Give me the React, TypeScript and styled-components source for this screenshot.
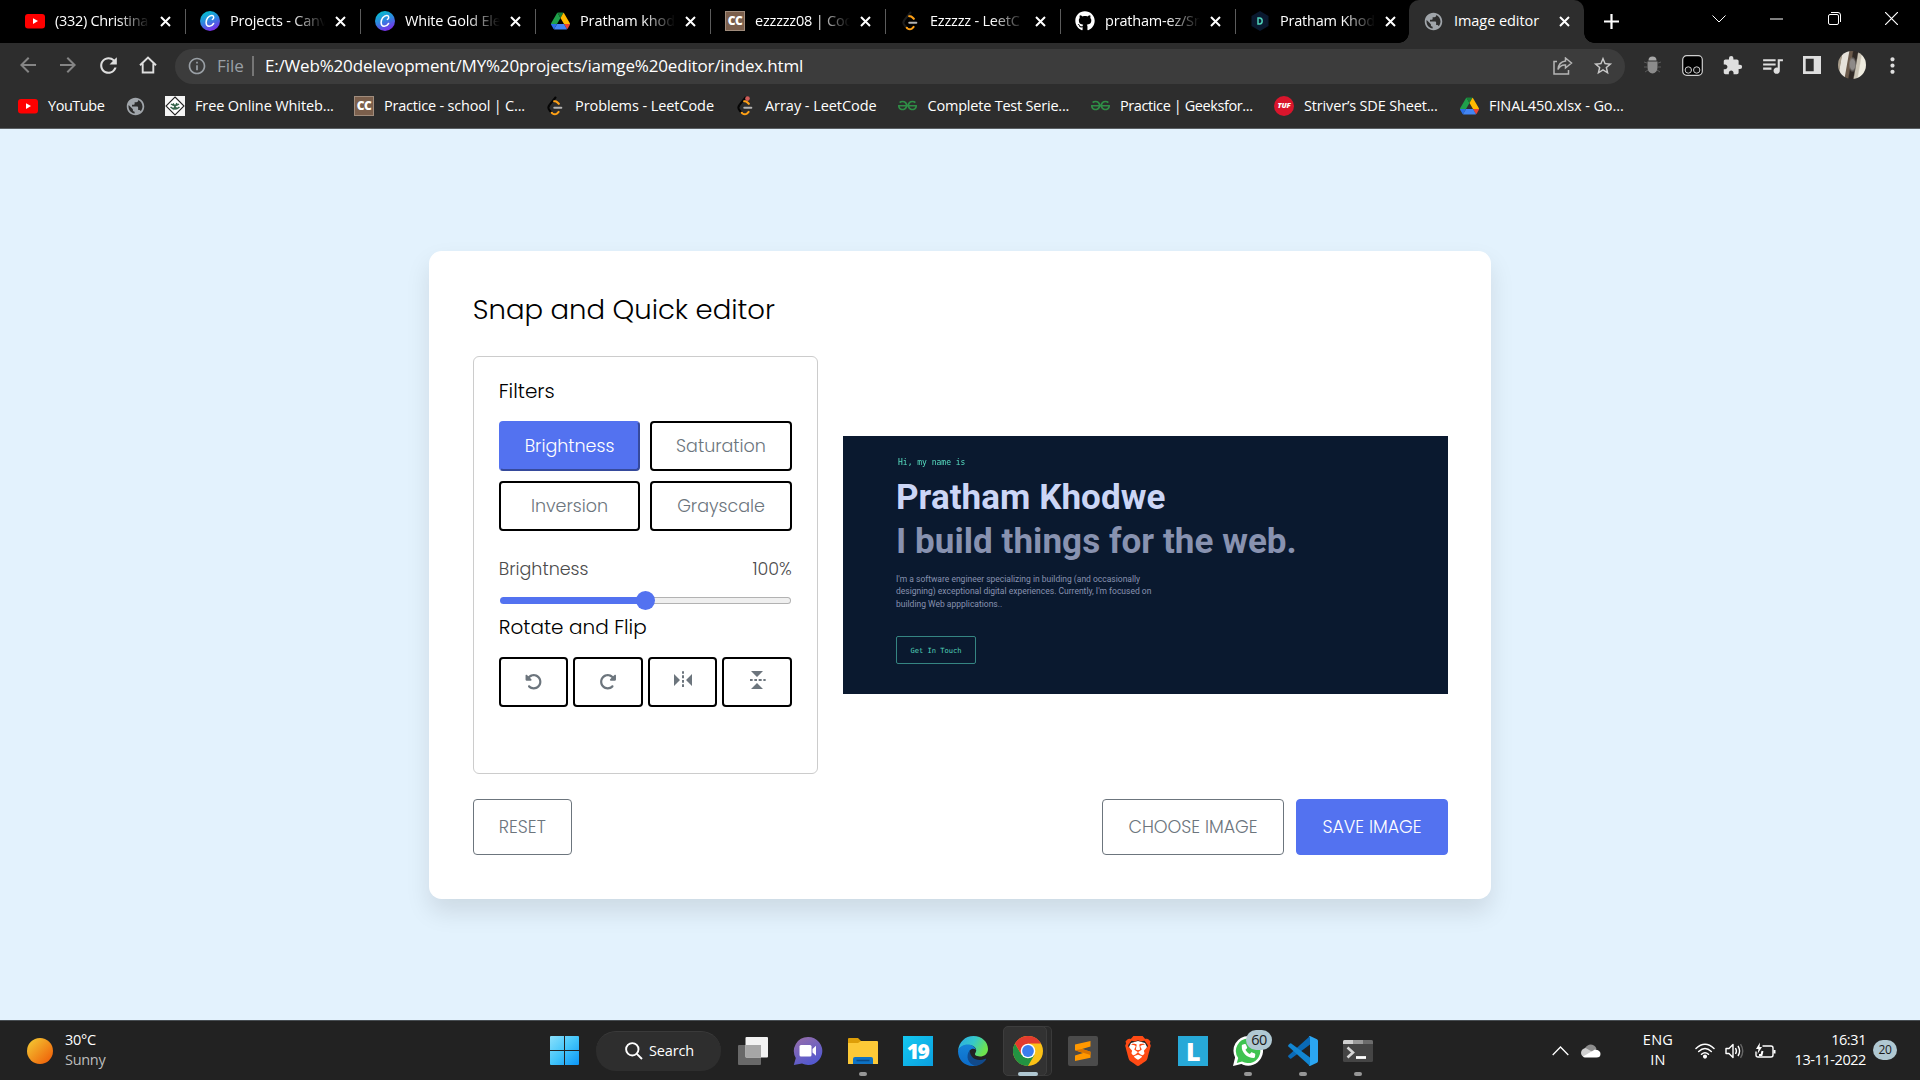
import React, { useState } from "react";
import styled, { createGlobalStyle, css } from "styled-components";
import {
  MdArrowBack,
  MdArrowForward,
  MdExtension,
  MdInfoOutline,
  MdMoreVert,
  MdPublic,
  MdQueueMusic,
  MdRefresh,
  MdStarBorder,
} from "react-icons/md";
import { FaGithub, FaPhone, FaRotateLeft, FaRotateRight } from "react-icons/fa6";
import { SiBrave, SiGeeksforgeeks } from "react-icons/si";

const uiFont = '"Segoe UI", "Open Sans", "Noto Sans", sans-serif';
const accent = "#5372f0";

const GlobalStyle = createGlobalStyle`
  *, *::before, *::after { box-sizing: border-box; }
  body { margin: 0; background: #e3f2fd; overflow: hidden; }
  button { margin: 0; cursor: pointer; }
  svg { display: block; flex: none; }
`;

const Desktop = styled.div`
  display: grid;
  grid-template-rows: 43px 44px 42px 1fr 60px;
  width: 1920px;
  height: 1080px;
  font-family: ${uiFont};
  color: #fff;
  overflow: hidden;
`;

/* ---------- Tab strip ---------- */

const TabStrip = styled.div`
  display: flex;
  background: #000;
  padding-left: 10px;
`;

const Tab = styled.div<{ $active?: boolean; $divider?: boolean }>`
  position: relative;
  display: flex;
  align-items: center;
  width: 175px;
  height: 43px;
  padding: 0 0 1px 15px;
  font-size: 14.5px;
  ${(p) =>
    p.$divider &&
    css`
      &::after {
        content: "";
        position: absolute;
        right: -1px;
        top: 9px;
        width: 1px;
        height: 25px;
        background: #5c5c5c;
      }
    `}
  ${(p) =>
    p.$active &&
    css`
      margin-left: -1px;
      padding-left: 14px;
      background: #2d2d2d;
      border-radius: 10px 10px 0 0;
      &::before,
      &::after {
        content: "";
        position: absolute;
        bottom: 0;
        width: 10px;
        height: 10px;
      }
      &::before {
        left: -10px;
        background: radial-gradient(circle at 0 0, #000 9.5px, #2d2d2d 10px);
      }
      &::after {
        right: -10px;
        background: radial-gradient(circle at 100% 0, #000 9.5px, #2d2d2d 10px);
      }
    `}
`;

const TabTitle = styled.span<{ $ls?: number; $fade?: boolean }>`
  width: 95px;
  margin: 0 10px;
  line-height: 20px;
  white-space: nowrap;
  letter-spacing: ${(p) => p.$ls ?? -0.2}px;
  ${(p) => p.$fade && "mask-image: linear-gradient(90deg, #000 62px, transparent 95px);"}
`;

const IconSlot = styled.span`
  display: grid;
  place-items: center;
  flex: 0 0 20px;
  height: 20px;
`;

const NewTab = styled.div`
  display: grid;
  place-items: center;
  width: 54px;
  height: 43px;
`;

const WindowButtons = styled.div`
  display: flex;
  margin-left: auto;
  height: 37px;
`;

const WindowButton = styled.div`
  display: grid;
  place-items: center;
  width: 57.3px;
`;

/* ---------- Toolbar ---------- */

const Toolbar = styled.div`
  display: flex;
  align-items: center;
  background: #2d2d2d;
  padding-left: 8px;
  color: #dedede;
`;

const ToolSlot = styled.div<{ $dim?: boolean }>`
  display: grid;
  place-items: center;
  flex: 0 0 40px;
  height: 40px;
  color: ${(p) => (p.$dim ? "#858585" : "inherit")};
`;

const AddressBar = styled.div`
  display: flex;
  align-items: center;
  width: 1450px;
  height: 35px;
  margin: 2px 7px 0;
  padding: 0 2px 0 12px;
  border-radius: 18px;
  background: #3c3c3c;
`;

const Scheme = styled.span`
  margin: 0 0 1px 10px;
  padding-right: 8px;
  border-right: 2px solid #767676;
  font-size: 17px;
  line-height: 20px;
  color: #9aa0a6;
`;

const Url = styled.span`
  flex: 1;
  margin: 0 0 2px 11px;
  font-size: 17px;
  letter-spacing: -0.17px;
  color: #fff;
  white-space: nowrap;
`;

const Avatar = styled.div`
  width: 28px;
  height: 28px;
  border-radius: 50%;
  background:
    radial-gradient(ellipse 4px 8px at 52% 48%, #8d8a88 0 60%, transparent 100%),
    linear-gradient(
      100deg,
      #a79c8a 0 14%,
      #e6e2da 16% 33%,
      #6b5a4b 36% 44%,
      #2f2925 48% 60%,
      #cbc5b6 64% 72%,
      #efece0 76%
    );
`;

/* ---------- Bookmarks ---------- */

const BookmarkBar = styled.div`
  display: flex;
  align-items: center;
  padding: 0 0 4px 18px;
  background: #2d2d2d;
  border-bottom: 1px solid #5a5f63;
`;

const Bookmark = styled.div<{ $w: number; $ls?: number }>`
  display: flex;
  align-items: center;
  gap: 10px;
  flex: 0 0 ${(p) => p.$w}px;
  font-size: 14.5px;
  line-height: 20px;
  letter-spacing: ${(p) => p.$ls ?? -0.1}px;
  white-space: nowrap;
`;

/* ---------- Favicons ---------- */

const ChefBadge = styled.span`
  display: grid;
  place-items: center;
  width: 20px;
  height: 20px;
  background: #7b5f4c;
  border: 1px solid #a08c7c;
  font: 800 12px/1 "Open Sans", sans-serif;
  letter-spacing: -0.6px;
  color: #fff;
`;

const TufBadge = styled.span`
  display: grid;
  place-items: center;
  width: 20px;
  height: 20px;
  border-radius: 50%;
  background: #d9152c;
  font: italic 800 7.5px/1 "Open Sans", sans-serif;
  color: #fff;
`;

const YouTubeIcon = () => (
  <svg width="20" height="20" viewBox="0 0 20 20">
    <rect y="3" width="20" height="14.4" rx="3" fill="#f00" />
    <path d="M8 7.3v5.6l5-2.8z" fill="#fff" />
  </svg>
);

const CanvaIcon = () => (
  <svg width="20" height="20" viewBox="0 0 20 20">
    <defs>
      <linearGradient id="canva" x1=".2" y1="0" x2=".6" y2="1">
        <stop offset="0" stopColor="#00c4cc" />
        <stop offset=".5" stopColor="#2f86e0" />
        <stop offset="1" stopColor="#7d2ae8" />
      </linearGradient>
    </defs>
    <circle cx="10" cy="10" r="10" fill="url(#canva)" />
    <path
      d="M12.4 8.4c1.7-.8 1.9-3.9-.3-4C8.6 4.2 5.9 8.2 6.1 11.8c.2 4.6 5 4.6 7.5.7"
      fill="none"
      stroke="#fff"
      strokeWidth="1.5"
      strokeLinecap="round"
    />
  </svg>
);

const DriveIcon = () => (
  <svg width="19" height="18" viewBox="0 0 87.3 78">
    <path d="M6.6 66.85l3.85 6.65c.8 1.4 1.95 2.5 3.3 3.3L27.5 53H0c0 1.55.4 3.1 1.2 4.5z" fill="#2a6fe8" />
    <path d="M43.65 25L29.9 1.2c-1.35.8-2.5 1.9-3.3 3.3L1.2 48.5A9 9 0 000 53h27.5z" fill="#1fa04a" />
    <path d="M73.55 76.8c1.35-.8 2.5-1.9 3.3-3.3l1.6-2.75L86.1 57.5c.8-1.4 1.2-2.95 1.2-4.5H59.8l5.85 11.5z" fill="#ea4335" />
    <path d="M43.65 25L57.4 1.2C56.05.4 54.5 0 52.9 0H34.4c-1.6 0-3.15.45-4.5 1.2z" fill="#188038" />
    <path d="M59.8 53H27.5L13.75 76.8c1.35.8 2.9 1.2 4.5 1.2h50.8c1.6 0 3.15-.45 4.5-1.2z" fill="#4285f4" />
    <path d="M73.4 26.5L60.7 4.5c-.8-1.4-1.95-2.5-3.3-3.3L43.65 25l16.15 28h27.45c0-1.55-.4-3.1-1.2-4.5z" fill="#ffba00" />
  </svg>
);

const LeetCodeIcon = ({ dot, dark }: { dot?: boolean; dark?: boolean }) => (
  <svg width="20" height="20" viewBox="0 0 20 20" fill="none" strokeWidth="2.1" strokeLinecap="round">
    <path d="M10.500 1.500L4.500 8.800q-2.200 2.700 0 5.400l1.300 1.500" stroke={dark ? "#1c1c1c" : "#050505"} />
    <path d="M9.200 5.300q1.700-.4 3 .9l1.600 1.600M6.800 16.800l.7.7q2.300 1.600 4.600 0l1.500-1.600" stroke="#ffa116" />
    <path d="M9.300 11.700h7" stroke="#b3b3b3" />
    {dot && <circle cx="12.5" cy="2.6" r="2.3" fill="#cf5b57" />}
  </svg>
);

const WhiteboardIcon = () => (
  <svg width="20" height="20" viewBox="0 0 20 20">
    <rect width="20" height="20" fill="#f4f4f4" />
    <path d="M10 1l9 9-9 9-9-9z" fill="#fff" stroke="#222" strokeWidth="1.1" />
    <path d="M6 8q4 3 8 0M5.5 11q4.5 4 9 0M8 7.5l4 6M12 7l-4 7" fill="none" stroke="#35634a" strokeWidth="1.5" />
  </svg>
);

const HexIcon = () => (
  <svg width="20" height="20" viewBox="0 0 20 20">
    <path d="M10 0l8.5 5v10L10 20l-8.5-5V5z" fill="#0a192f" />
    <path d="M8 7v6h1.6q2.6-.2 2.6-3T9.600 7z" fill="none" stroke="#4fd0b8" strokeWidth="1.5" />
  </svg>
);

const CloseIcon = () => (
  <svg width="11" height="11" viewBox="0 0 11 11">
    <path d="M1 1l9 9M10 1l-9 9" stroke="#fff" strokeWidth="2" />
  </svg>
);

const Globe = () => <MdPublic size={21} color="#a0a5aa" />;

/* ---------- Editor ---------- */

const Page = styled.main`
  display: grid;
  place-items: center;
  background: #e3f2fd;
`;

const Card = styled.section`
  display: flex;
  flex-direction: column;
  width: 1062px;
  height: 648px;
  padding: 38px 43px 44px 43.75px;
  border-radius: 12.5px;
  background: #fff;
  box-shadow: 0 12.5px 25px rgba(0, 0, 0, 0.1);
  font-family: Poppins, Inter, sans-serif;
  font-weight: 300;
  color: #000;
`;

const Heading = styled.h2`
  margin: 0;
  font-size: 27.5px;
  font-weight: 300;
  line-height: 42px;
`;

const Workspace = styled.div`
  display: flex;
  align-items: center;
  justify-content: space-between;
  height: 418px;
  margin-top: 25px;
`;

const Panel = styled.div`
  width: 345px;
  height: 100%;
  padding: 19px 25px;
  border: 1px solid #ccc;
  border-radius: 6px;
`;

const SectionTitle = styled.label`
  display: block;
  font-size: 20px;
  line-height: 30px;
`;

const ButtonGrid = styled.div<{ $cols: number; $gap: string }>`
  display: grid;
  grid-template-columns: repeat(${(p) => p.$cols}, 1fr);
  gap: ${(p) => p.$gap};
  margin-top: 15px;
`;

const ToolButton = styled.button<{ $active?: boolean }>`
  display: grid;
  place-items: center;
  height: 50px;
  padding: 0;
  border: 2px ${(p) => (p.$active ? `outset ${accent}` : "solid #000")};
  border-radius: 4px;
  background: ${(p) => (p.$active ? accent : "#fff")};
  color: ${(p) => (p.$active ? "#fff" : "#6c757d")};
  font: inherit;
  font-size: 17.5px;
`;

const SliderInfo = styled.div`
  display: flex;
  justify-content: space-between;
  margin-top: 25px;
  font-size: 17.5px;
  line-height: 26px;
  color: #4c4c4c;
`;

const Slider = styled.input`
  display: block;
  appearance: none;
  width: 100%;
  height: 20px;
  margin: 9px 0 1px;
  background: transparent;
  &::-webkit-slider-runnable-track {
    height: 7px;
    margin: 0 1px;
    border: 1px solid transparent;
    border-radius: 4px;
    background:
      linear-gradient(90deg, ${accent} 50%, transparent 50%) border-box,
      linear-gradient(#efefef, #efefef) padding-box,
      linear-gradient(#b2b2b2, #b2b2b2) border-box;
  }
  &::-webkit-slider-thumb {
    appearance: none;
    width: 19px;
    height: 19px;
    margin-top: -7px;
    border-radius: 50%;
    background: ${accent};
  }
`;

const Preview = styled.div`
  display: flex;
  flex-direction: column;
  align-items: flex-start;
  width: 605px;
  height: 258px;
  padding: 20px 0 0 53px;
  background: #0a192f;
  font-family: Roboto, sans-serif;
`;

const Greeting = styled.span`
  margin: 0 0 6px 2px;
  font: 400 8px/14px "DejaVu Sans Mono", monospace;
  color: #64ffda;
  opacity: 0.85;
`;

const Display = styled.span<{ $muted?: boolean }>`
  font-size: 35px;
  font-weight: 700;
  line-height: 44px;
  letter-spacing: 0.05px;
  white-space: nowrap;
  color: ${(p) => (p.$muted ? "#8892b0" : "#ccd6f6")};
`;

const Bio = styled.p`
  margin: 9px 0 26px;
  font-size: 8.5px;
  font-weight: 400;
  line-height: 12.6px;
  white-space: pre;
  color: #8892b0;
`;

const TouchButton = styled.div`
  display: grid;
  place-items: center;
  width: 80px;
  height: 28px;
  border: 1px solid #358582;
  border-radius: 2px;
  font: 400 7.1px/1 "DejaVu Sans Mono", monospace;
  color: #50cfb6;
`;

const Footer = styled.div`
  display: flex;
  gap: 12px;
  height: 56px;
  margin-top: 25px;
`;

const FooterButton = styled.button<{ $w: number; $primary?: boolean; $push?: boolean }>`
  width: ${(p) => p.$w}px;
  padding: 0;
  margin-left: ${(p) => (p.$push ? "auto" : "0")};
  border: 1px solid ${(p) => (p.$primary ? accent : "#6c757d")};
  border-radius: 4px;
  background: ${(p) => (p.$primary ? accent : "#fff")};
  color: ${(p) => (p.$primary ? "#fff" : "#6c757d")};
  font: inherit;
  font-size: 17.5px;
  text-transform: uppercase;
  white-space: nowrap;
`;

const FlipIcon = ({ vertical }: { vertical?: boolean }) => (
  <svg width="18" height="18" viewBox="0 0 54 54" fill="#6c757d" transform={vertical ? "rotate(90)" : undefined}>
    <path d="M0 9v36l18-18zM54 9v36L36 27zM24 1h6v7h-6zM24 13h6v9h-6zM24 27h6v8h-6zM24 40h6v8h-6z" />
  </svg>
);

const FlipSlot = styled.span`
  display: block;
  margin-bottom: 4px;
`;

/* ---------- Taskbar ---------- */

const Taskbar = styled.footer`
  display: flex;
  align-items: center;
  background: #222;
  border-top: 1px solid #474d52;
  font-size: 14.5px;
  line-height: 20px;
`;

const Weather = styled.div`
  display: flex;
  align-items: center;
  width: 550px;
  padding-left: 27px;
  gap: 12px;
`;

const Sun = styled.div`
  width: 26px;
  height: 26px;
  border-radius: 50%;
  background: linear-gradient(135deg, #f3bd2e 15%, #f0680c 85%);
`;

const Stack = styled.div<{ $align?: string; $ls?: number }>`
  padding-bottom: 2px;
  text-align: ${(p) => p.$align ?? "left"};
  letter-spacing: ${(p) => p.$ls ?? -0.3}px;
  white-space: nowrap;
`;

const Muted = styled.div`
  color: #bdbdbd;
`;

const SearchPill = styled.div`
  display: flex;
  align-items: center;
  gap: 6px;
  width: 125px;
  height: 40px;
  margin: 0 4px 0 17px;
  padding-left: 29px;
  border-radius: 20px;
  background: #2e2e2e;
  border-top: 1px solid #3a3a3a;
  letter-spacing: -0.14px;
`;

const AppSlot = styled.div<{ $running?: "idle" | "focused" }>`
  position: relative;
  display: grid;
  place-items: center;
  width: 55px;
  height: 50px;
  ${(p) =>
    p.$running &&
    css`
      &::after {
        content: "";
        position: absolute;
        bottom: 0;
        left: 50%;
        width: ${p.$running === "focused" ? 20 : 8}px;
        height: 4px;
        transform: translateX(-50%);
        border-radius: 2px;
        background: ${p.$running === "focused" ? "#b0c8d2" : "#979797"};
      }
    `}
  ${(p) =>
    p.$running === "focused" &&
    css`
      &::before {
        content: "";
        position: absolute;
        inset: 0 8px 0 3px;
        border: 1px solid #3d3d3d;
        border-radius: 5px;
        background: #323232;
        box-shadow: 5px 0 0 -1px #2a2a2a, 5px 0 0 0 #3a3a3a;
      }
      > svg {
        position: relative;
      }
    `}
`;

const Tile = styled.span<{ $bg: string; $size: number }>`
  display: grid;
  place-items: center;
  width: 30px;
  height: 30px;
  background: ${(p) => p.$bg};
  font: 800 ${(p) => p.$size}px/30px "Open Sans", sans-serif;
  letter-spacing: -1.5px;
  color: #fff;
`;

const Unread = styled.span`
  position: absolute;
  top: 4px;
  left: 26px;
  width: 26px;
  border-radius: 10px;
  background: #b0c8d2;
  color: #1a1a1a;
  text-align: center;
  line-height: 20px;
  letter-spacing: -0.5px;
`;

const Tray = styled.div`
  display: flex;
  align-items: center;
  margin-left: auto;
  padding-right: 23px;
`;

const TrayGap = styled.div<{ $w: number; $end?: boolean }>`
  display: grid;
  place-items: center ${(p) => (p.$end ? "end" : "center")};
  width: ${(p) => p.$w}px;
`;

const LanguageSlot = styled(TrayGap)`
  margin: 0 2px 0 23px;
`;

const Count = styled.span`
  width: 24px;
  height: 20px;
  margin: 0 0 2px 7px;
  border-radius: 10px;
  background: #b0c8d2;
  color: #1a1a1a;
  font-size: 12px;
  text-align: center;
  letter-spacing: -0.3px;
`;

const WindowsLogo = () => (
  <svg width="29" height="29" viewBox="0 0 29 29">
    <defs>
      <linearGradient id="win" x1="0" y1="0" x2="29" y2="29" gradientUnits="userSpaceOnUse">
        <stop offset="0" stopColor="#8be0fb" />
        <stop offset=".5" stopColor="#43c5fa" />
        <stop offset="1" stopColor="#0b95f6" />
      </linearGradient>
    </defs>
    <path d="M0 1q0-1 1-1h13v14H0zM15 0h13q1 0 1 1v13H15zM0 15h14v14H1q-1 0-1-1zM15 15h14v13q0 1-1 1H15z" fill="url(#win)" />
  </svg>
);

const TaskViewIcon = () => (
  <svg width="30" height="28" viewBox="0 0 30 28">
    <rect y="8" width="23" height="20" rx="1" fill="#686868" />
    <rect x="7.5" width="22.5" height="20.5" rx="1" fill="#f2f2f2" />
    <path d="M7.5 8H23v12.5H7.5z" fill="#a6a6a6" />
  </svg>
);

const ChatIcon = () => (
  <svg width="30" height="30" viewBox="0 0 30 30">
    <defs>
      <linearGradient id="chat" x1="0" y1="0" x2=".5" y2="1">
        <stop offset="0" stopColor="#9a6fa8" />
        <stop offset="1" stopColor="#5459cf" />
      </linearGradient>
    </defs>
    <path d="M15 1a14 14 0 11-6 26.5L.8 29l2-7A14 14 0 0115 1z" fill="url(#chat)" />
    <rect x="6.5" y="9" width="12" height="11.5" rx="1.5" fill="#fff" />
    <path d="M19.5 13l3.5-3.2v10l-3.5-3.3z" fill="#fff" />
  </svg>
);

const FolderIcon = () => (
  <svg width="30" height="28" viewBox="0 0 30 28">
    <path d="M0 2q0-1 1-1h9l3 3v5H0z" fill="#dd9e08" />
    <path d="M0 6h10l3-2h16q1 0 1 1v22H0z" fill="#fcc937" />
    <path d="M5 27v-5q0-2 2-2h16q2 0 2 2v5z" fill="#0d72c4" />
    <path d="M8.5 23.5h13" stroke="#0a4a86" strokeWidth="1.5" />
  </svg>
);

const EdgeIcon = () => (
  <svg width="30" height="30" viewBox="0 0 30 30">
    <defs>
      <linearGradient id="edgeTop" x1="0" y1="0" x2="1" y2=".4">
        <stop offset="0" stopColor="#2aa8e8" />
        <stop offset=".55" stopColor="#36c9c9" />
        <stop offset="1" stopColor="#6de34f" />
      </linearGradient>
      <linearGradient id="edgeLeft" x1="0" y1="0" x2="0" y2="1">
        <stop offset="0" stopColor="#1583d8" />
        <stop offset="1" stopColor="#0c6cc9" />
      </linearGradient>
    </defs>
    <path d="M0 15C1 6 7 0 15.5 0 24 0 30 6 30 13c0 5-4 7.5-8 7.5-4.5 0-6-2-4.5-3.7C20 13 16 9 11 9 5 9 1 12 0 15z" fill="url(#edgeTop)" />
    <path d="M0 15c1-4 5-6.5 10-6.5 4 0 7.5 2.5 7.8 5.5-2-2.5-7-1-7 4 0 6 5 10 11 10-2 1.3-4.5 2-7 2C6 30 0 23.5 0 15z" fill="url(#edgeLeft)" />
    <path d="M12 14c-5 6-2 14 5 15.8 4 .2 8.5-2.3 11-6.3.5-.8 0-1-.7-.7-8 3.5-16-.8-15.3-8.8z" fill="#114a8b" />
  </svg>
);

const ChromeIcon = () => (
  <svg width="30" height="30" viewBox="0 0 30 30">
    <circle cx="15" cy="15" r="15" fill="#fbc116" />
    <path d="M2 7.5A15 15 0 0015 30l6.5-11.2h-13z" fill="#229342" />
    <path d="M2 7.5A15 15 0 0128 7.5H15l-6.5 11.3z" fill="#e33b2e" />
    <circle cx="15" cy="15" r="7.3" fill="#fff" />
    <circle cx="15" cy="15" r="5.9" fill="#3b7ded" />
  </svg>
);

const SublimeIcon = () => (
  <svg width="30" height="30" viewBox="0 0 30 30">
    <rect width="30" height="30" rx="2" fill="#4b4b4b" />
    <path d="M22.5 5v5.5L14 13l8.5 2.7v6L7 25v-5.5l8-2.5-8-2.8V8.5z" fill="#ff9800" />
    <path d="M7 14.2L22.5 19v-3.3L14 13z" fill="#d87300" />
  </svg>
);

const BraveIcon = () => (
  <svg width="30" height="30" viewBox="0 0 30 30">
    <path d="M8 7l7-2 7 2 2 4-3 10-6 5-6-5-3-10z" fill="#fff" />
    <SiBrave size={30} color="#ff4a14" />
  </svg>
);

const WhatsAppIcon = () => (
  <svg width="30" height="30" viewBox="0 0 30 30">
    <path d="M15.2 0A14.8 14.8 0 112.3 22 14.8 14.8 0 0115.2 0zM0 30l2.2-9 7 6.8z" fill="#fff" />
    <path d="M15.2 2.5A12.3 12.3 0 119 25.5l-5.2 1.4 1.4-5A12.3 12.3 0 0115.2 2.5z" fill="#3fc351" />
    <FaPhone x="8.5" y="8" size={14} color="#fff" />
  </svg>
);

const VsCodeIcon = () => (
  <svg width="30" height="30" viewBox="0 0 30 30">
    <path d="M22 8.5L3.3 22.5q-.7.4-1.3 0L.4 21q-.6-.8 0-1.5L22 0z" fill="#0a6ab6" />
    <path d="M22 21.5L3.3 7.5q-.7-.4-1.3 0L.4 9q-.6.8 0 1.5L22 30z" fill="#1286d2" />
    <path d="M22 0l7 3.3q1 .6 1 1.7v20q0 1.1-1 1.7L22 30q-1 .2-1.3-.5.9.3 1.3-.7V1.2Q21.6.2 20.7.5 21-.2 22 0z" fill="#2ba6f2" />
  </svg>
);

const TerminalIcon = () => (
  <svg width="30" height="30" viewBox="0 0 30 30">
    <rect y="4" width="30" height="22" rx="1.5" fill="#454545" />
    <path d="M0 5.5Q0 4 1.5 4H10v4H0z" fill="#d0d0d0" />
    <path d="M10 4h10v4H10z" fill="#9a9a9a" />
    <path d="M20 4h8.5Q30 4 30 5.5V8H20z" fill="#6c6c6c" />
    <path d="M4.5 11.5l5.5 5-5.5 5" fill="none" stroke="#d6d6d6" strokeWidth="2.6" />
    <path d="M13 21.5h10" stroke="#fff" strokeWidth="2.8" />
  </svg>
);

const WifiIcon = () => (
  <svg width="20" height="16" viewBox="0 0 20 16" fill="none" stroke="#fff" strokeWidth="1.5" strokeLinecap="round">
    <path d="M1 5.5Q10-3 19 5.5M3.7 8.5q6.3-6 12.6 0M6.5 11.3q3.5-3.2 7 0" />
    <circle cx="10" cy="13.6" r="1.3" fill="#fff" />
  </svg>
);

const VolumeIcon = () => (
  <svg width="20" height="16" viewBox="0 0 20 16" fill="none" stroke="#fff" strokeWidth="1.4" strokeLinejoin="round">
    <path d="M1 5.5h3L8 1.5v13l-4-4H1zM10.5 5q1.8 3 0 6M13 3q3.2 5 0 10" />
    <path d="M15.5 1.2q4.5 6.8 0 13.6" stroke="#666" />
  </svg>
);

const BatteryIcon = () => (
  <svg width="21" height="17" viewBox="0 0 21 17" fill="none" stroke="#fff" strokeWidth="1.4">
    <path d="M7.5 4H16q2 0 2 2v7q0 2-2 2H3q-2 0-2-2V9.500" />
    <path d="M18.5 8h2v3.5h-2z" fill="#fff" stroke="none" />
    <path d="M5 .5L1 7h2.5l-1 5L7 5H4.5z" fill="#fff" stroke="none" />
    <path d="M4 13h2.5l1-4" strokeWidth="2" />
  </svg>
);

const tabs: { title: string; icon: React.ReactNode; ls?: number }[] = [
  { title: "(332) Christina", icon: <YouTubeIcon />, ls: -0.3 },
  { title: "Projects - Canv", icon: <CanvaIcon /> },
  { title: "White Gold Ele", icon: <CanvaIcon /> },
  { title: "Pratham khod", icon: <DriveIcon />, ls: -0.1 },
  { title: "ezzzzz08 | Cod", icon: <ChefBadge>CC</ChefBadge> },
  { title: "Ezzzzz - LeetC", icon: <LeetCodeIcon dark /> },
  { title: "pratham-ez/Sn", icon: <FaGithub size={20} color="#fff" /> },
  { title: "Pratham Khod", icon: <HexIcon /> },
];

const bookmarks: { label?: string; icon: React.ReactNode; w: number; ls?: number }[] = [
  { label: "YouTube", icon: <YouTubeIcon />, w: 107, ls: -0.46 },
  { icon: <Globe />, w: 40 },
  { label: "Free Online Whiteb...", icon: <WhiteboardIcon />, w: 189, ls: -0.12 },
  { label: "Practice - school | C...", icon: <ChefBadge>CC</ChefBadge>, w: 191, ls: -0.2 },
  { label: "Problems - LeetCode", icon: <LeetCodeIcon />, w: 190, ls: -0.08 },
  { label: "Array - LeetCode", icon: <LeetCodeIcon dot />, w: 162.5, ls: -0.05 },
  { label: "Complete Test Serie...", icon: <SiGeeksforgeeks size={19} color="#2f8d46" />, w: 192.5, ls: -0.21 },
  { label: "Practice | Geeksfor...", icon: <SiGeeksforgeeks size={19} color="#2f8d46" />, w: 184, ls: -0.4 },
  { label: "Striver’s SDE Sheet...", icon: <TufBadge>TUF</TufBadge>, w: 185, ls: -0.16 },
  { label: "FINAL450.xlsx - Go...", icon: <DriveIcon />, w: 170, ls: -0.09 },
];

const filters = ["Brightness", "Saturation", "Inversion", "Grayscale"];

export default function App() {
  const [active, setActive] = useState("Brightness");
  return (
    <Desktop>
      <GlobalStyle />
      <TabStrip>
        {tabs.map((t, i) => (
          <Tab key={t.title} $divider={i < tabs.length - 1}>
            <IconSlot>{t.icon}</IconSlot>
            <TabTitle $fade $ls={t.ls}>
              {t.title}
            </TabTitle>
            <CloseIcon />
          </Tab>
        ))}
        <Tab $active>
          <IconSlot>
            <Globe />
          </IconSlot>
          <TabTitle $ls={-0.06}>Image editor</TabTitle>
          <CloseIcon />
        </Tab>
        <NewTab>
          <svg width="15" height="15" viewBox="0 0 15 15">
            <path d="M7.5 0v15M0 7.5h15" stroke="#fff" strokeWidth="2.2" />
          </svg>
        </NewTab>
        <WindowButtons>
          <WindowButton>
            <svg width="14" height="8" viewBox="0 0 14 8" fill="none" stroke="#fff">
              <path d="M.5.5L7 7 13.5.5" />
            </svg>
          </WindowButton>
          <WindowButton>
            <svg width="13" height="2" viewBox="0 0 13 2">
              <path d="M0 1h13" stroke="#fff" />
            </svg>
          </WindowButton>
          <WindowButton>
            <svg width="13" height="13" viewBox="0 0 13 13" fill="none" stroke="#fff">
              <rect x=".5" y="2.5" width="10" height="10" rx="1.5" />
              <path d="M3 .5h7q2.5 0 2.5 2.5v7" />
            </svg>
          </WindowButton>
          <WindowButton>
            <svg width="13" height="13" viewBox="0 0 13 13">
              <path d="M0 0l13 13M13 0L0 13" stroke="#fff" strokeWidth="1.2" />
            </svg>
          </WindowButton>
        </WindowButtons>
      </TabStrip>

      <Toolbar>
        <ToolSlot $dim>
          <MdArrowBack size={24} />
        </ToolSlot>
        <ToolSlot $dim>
          <MdArrowForward size={24} />
        </ToolSlot>
        <ToolSlot>
          <MdRefresh size={25} />
        </ToolSlot>
        <ToolSlot>
          <svg width="18" height="18" viewBox="0 0 18 18" fill="none" stroke="currentColor" strokeWidth="1.9">
            <path d="M1 9.3l8-7.8 8 7.8M3.7 7.5v9h10.6v-9" />
          </svg>
        </ToolSlot>
        <AddressBar>
          <MdInfoOutline size={20} color="#9aa0a6" />
          <Scheme>File</Scheme>
          <Url>E:/Web%20delevopment/MY%20projects/iamge%20editor/index.html</Url>
          <ToolSlot>
            <svg width="20" height="18" viewBox="0 0 20 18" fill="none" stroke="#b5b5b5" strokeWidth="1.5">
              <path d="M4 4.5H1V17h14.500v-4" />
              <path d="M12.5 1l6 5-6 5V8Q7.5 7.5 5 12.5 5.5 5 12.5 4z" />
            </svg>
          </ToolSlot>
          <ToolSlot>
            <MdStarBorder size={22} color="#c8c8c8" />
          </ToolSlot>
        </AddressBar>
        <ToolSlot>
          <svg width="17" height="18" viewBox="0 0 17 18">
            <path d="M4.5 4.5a4 4 0 018 0z" fill="#a8a8a8" />
            <path d="M3.5 5.5h10v6a5 6 0 01-10 0z" fill="#8b8b8b" />
            <path d="M0 6l3 1M17 6l-3 1M0 11h3M17 11h-3M1 16l3-2M16 16l-3-2" stroke="#5a5a5a" />
          </svg>
        </ToolSlot>
        <ToolSlot>
          <svg width="21" height="21" viewBox="0 0 21 21" stroke="#cfcfcf">
            <rect x=".7" y=".7" width="19.6" height="19.6" rx="4" fill="#000" strokeWidth="1.2" />
            <circle cx="6.3" cy="15" r="3.2" fill="#111" />
            <circle cx="14.7" cy="15" r="3.2" fill="#111" />
          </svg>
        </ToolSlot>
        <ToolSlot>
          <MdExtension size={21} />
        </ToolSlot>
        <ToolSlot>
          <MdQueueMusic size={25} />
        </ToolSlot>
        <ToolSlot>
          <svg width="18" height="18" viewBox="0 0 18 18">
            <path d="M0 0h18v18H0zM2.7 2.7v12.6h8V2.7z" fill="currentColor" fillRule="evenodd" />
          </svg>
        </ToolSlot>
        <ToolSlot>
          <Avatar />
        </ToolSlot>
        <ToolSlot>
          <MdMoreVert size={25} />
        </ToolSlot>
      </Toolbar>

      <BookmarkBar>
        {bookmarks.map((b, i) => (
          <Bookmark key={i} $w={b.w} $ls={b.ls}>
            <IconSlot>{b.icon}</IconSlot>
            {b.label}
          </Bookmark>
        ))}
      </BookmarkBar>

      <Page>
        <Card>
          <Heading>Snap and Quick editor</Heading>
          <Workspace>
            <Panel>
              <SectionTitle>Filters</SectionTitle>
              <ButtonGrid $cols={2} $gap="10px">
                {filters.map((f) => (
                  <ToolButton key={f} $active={f === active} onClick={() => setActive(f)}>
                    {f}
                  </ToolButton>
                ))}
              </ButtonGrid>
              <SliderInfo>
                <span>{active}</span>
                <span>100%</span>
              </SliderInfo>
              <Slider type="range" min="0" max="200" defaultValue="100" />
              <SectionTitle>Rotate and Flip</SectionTitle>
              <ButtonGrid $cols={4} $gap="5px">
                <ToolButton>
                  <FaRotateLeft size={17.5} />
                </ToolButton>
                <ToolButton>
                  <FaRotateRight size={17.5} />
                </ToolButton>
                <ToolButton>
                  <FlipSlot>
                    <FlipIcon />
                  </FlipSlot>
                </ToolButton>
                <ToolButton>
                  <FlipSlot>
                    <FlipIcon vertical />
                  </FlipSlot>
                </ToolButton>
              </ButtonGrid>
            </Panel>
            <Preview>
              <Greeting>Hi, my name is</Greeting>
              <Display>Pratham Khodwe</Display>
              <Display $muted>I build things for the web.</Display>
              <Bio>
                {"I'm a software engineer specializing in building (and occasionally\ndesigning) exceptional digital experiences. Currently, I'm focused on\nbuilding Web appplications.."}
              </Bio>
              <TouchButton>Get In Touch</TouchButton>
            </Preview>
          </Workspace>
          <Footer>
            <FooterButton $w={99}>Reset</FooterButton>
            <FooterButton $w={182} $push>
              Choose Image
            </FooterButton>
            <FooterButton $w={152} $primary>
              Save Image
            </FooterButton>
          </Footer>
        </Card>
      </Page>

      <Taskbar>
        <Weather>
          <Sun />
          <Stack>
            <div>30°C</div>
            <Muted>Sunny</Muted>
          </Stack>
        </Weather>
        <WindowsLogo />
        <SearchPill>
          <svg width="18" height="18" viewBox="0 0 18 18" fill="none" stroke="#fff" strokeWidth="1.9">
            <circle cx="7.3" cy="7.3" r="6.2" />
            <path d="M11.8 11.8L17 17" />
          </svg>
          Search
        </SearchPill>
        <AppSlot>
          <TaskViewIcon />
        </AppSlot>
        <AppSlot>
          <ChatIcon />
        </AppSlot>
        <AppSlot $running="idle">
          <FolderIcon />
        </AppSlot>
        <AppSlot>
          <Tile $bg="linear-gradient(135deg, #14c8f0, #0a9fe0)" $size={21}>
            19
          </Tile>
        </AppSlot>
        <AppSlot>
          <EdgeIcon />
        </AppSlot>
        <AppSlot $running="focused">
          <ChromeIcon />
        </AppSlot>
        <AppSlot>
          <SublimeIcon />
        </AppSlot>
        <AppSlot>
          <BraveIcon />
        </AppSlot>
        <AppSlot>
          <Tile $bg="#27a9d8" $size={25}>
            L
          </Tile>
        </AppSlot>
        <AppSlot $running="idle">
          <WhatsAppIcon />
          <Unread>60</Unread>
        </AppSlot>
        <AppSlot $running="idle">
          <VsCodeIcon />
        </AppSlot>
        <AppSlot $running="idle">
          <TerminalIcon />
        </AppSlot>
        <Tray>
          <TrayGap $w={30}>
            <svg width="17" height="10" viewBox="0 0 17 10" fill="none" stroke="#fff" strokeWidth="1.3">
              <path d="M.7 9l7.8-8 7.8 8" />
            </svg>
          </TrayGap>
          <TrayGap $w={30}>
            <svg width="21" height="14" viewBox="0 0 21 14">
              <path d="M5 10a4.5 4.5 0 010-6q4-5.500 9-2.500 2 1.300 2.500 3.500L8 11z" fill="#8d8d8d" />
              <path d="M1 9q0-4 4.500-5l9 5L5 13Q1.500 13 1 9z" fill="#cfcfcf" />
              <path d="M3 12.500l12-7q5.500.5 5.500 4.500 0 3.500-4 3.500H5q-1.500 0-2-1z" fill="#fff" />
            </svg>
          </TrayGap>
          <LanguageSlot $w={60}>
            <Stack $align="center" $ls={0.3}>
              <div>ENG</div>
              <div>IN</div>
            </Stack>
          </LanguageSlot>
          <TrayGap $w={30}>
            <WifiIcon />
          </TrayGap>
          <TrayGap $w={30}>
            <VolumeIcon />
          </TrayGap>
          <TrayGap $w={30}>
            <BatteryIcon />
          </TrayGap>
          <TrayGap $w={86} $end>
            <Stack $align="right" $ls={-0.42}>
              <div>16:31</div>
              <div>13-11-2022</div>
            </Stack>
          </TrayGap>
          <Count>20</Count>
        </Tray>
      </Taskbar>
    </Desktop>
  );
}
